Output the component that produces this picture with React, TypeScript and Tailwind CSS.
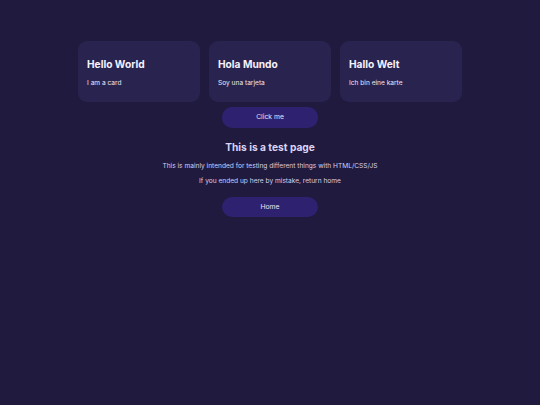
const cards = [
  { title: "Hello World", text: "I am a card" },
  { title: "Hola Mundo", text: "Soy una tarjeta" },
  { title: "Hallo Welt", text: "Ich bin eine karte" },
];

export default function App() {
  return (
    <div className="min-h-[405px] bg-[#1f1a3e] font-['Inter',sans-serif] flex flex-col items-center pt-[41px]">
      <div className="flex gap-[9px]">
        {cards.map((c) => (
          <div key={c.title} className="w-[122px] h-[61px] rounded-[9px] bg-[#292350] px-[9px] pt-[16px]">
            <h2 className="text-[10.2px] leading-[14px] font-bold text-[#f4f1fb]">{c.title}</h2>
            <p className="mt-[7px] text-[6.6px] leading-[10px] text-[#ebe8f5]">{c.text}</p>
          </div>
        ))}
      </div>
      <button className="mt-[5px] w-[96px] h-[21px] rounded-[10px] bg-[#2e2170] text-[6.8px] text-[#e6e1f9]">
        Click me
      </button>
      <h1 className="mt-[12px] text-[10.2px] leading-[14px] font-bold text-[#dcd3f4]">This is a test page</h1>
      <p className="mt-[7px] text-[6.6px] leading-[10px] text-[#d6cff0]">
        This is mainly intended for testing different things with HTML/CSS/JS
      </p>
      <p className="mt-[5px] text-[6.6px] leading-[10px] text-[#d6cff0]">If you ended up here by mistake, return home</p>
      <button className="mt-[11px] w-[96px] h-[20px] rounded-[10px] bg-[#2e2170] text-[6.8px] text-[#e6e1f9]">
        Home
      </button>
    </div>
  );
}
